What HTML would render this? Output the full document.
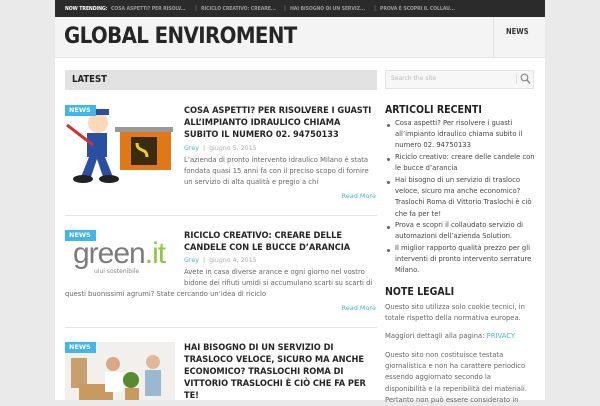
<!DOCTYPE html>
<html><head><meta charset="utf-8"><style>
*{margin:0;padding:0;box-sizing:border-box}
body{width:600px;height:400px;overflow:hidden;background:#eaeaea;font-family:"DejaVu Sans","Liberation Sans",sans-serif;position:relative}
.a{position:absolute;white-space:nowrap}
.c{font-family:"DejaVu Sans Condensed","DejaVu Sans",sans-serif}
.wrap{position:absolute;left:55px;top:0;width:490px;height:400px;background:#fff}
.top{position:absolute;left:55px;top:0;width:490px;height:17px;background:#2b2b2b}
.hdr{position:absolute;left:55px;top:17px;width:490px;height:41px;background:#f4f4f4;border-bottom:1px solid #e4e4e4}
.tr{font-family:"DejaVu Sans Condensed","DejaVu Sans",sans-serif;font-size:5.2px;font-weight:bold;color:#9a9a9a;top:6px;letter-spacing:-0.1px}
.badge{position:absolute;width:31px;height:11px;background:#43b5e8;color:#fff;font-size:6.5px;font-weight:bold;line-height:11px;padding-left:4px}
.t{position:absolute;left:184px;font-family:"DejaVu Sans Condensed","DejaVu Sans",sans-serif;font-size:9.2px;font-weight:bold;color:#262626;line-height:12px;white-space:nowrap;letter-spacing:-0.05px}
.m{position:absolute;left:184px;font-size:6.3px;color:#aaa;white-space:nowrap}
.m b{color:#43b5e8;font-weight:normal}
.ex{position:absolute;font-size:6.8px;color:#666;line-height:11.2px;white-space:nowrap}
.rm{position:absolute;right:224px;font-size:6.5px;color:#43b5e8}
.sep{position:absolute;left:65px;width:312px;height:1px;background:#e6e6e6}
.sb{position:absolute;left:395px;font-size:6.8px;color:#444;line-height:11.2px;white-space:nowrap}
.bul{position:absolute;left:387px;width:3px;height:3px;border-radius:50%;background:#666}
.st{position:absolute;left:385px;font-family:"DejaVu Sans Condensed","DejaVu Sans",sans-serif;font-size:10.5px;font-weight:bold;color:#222}
.nl{position:absolute;left:385px;font-size:6.8px;color:#666;line-height:11.2px;white-space:nowrap}
</style></head><body>
<div class="wrap"></div>
<div class="top"></div>
<div class="a tr" style="left:65px;color:#fff">NOW TRENDING:</div>
<div class="a tr" style="left:111px">COSA ASPETTI? PER RISOLV...</div>
<div class="a" style="left:195px;top:5px;font-size:6px;color:#777">|</div>
<div class="a tr" style="left:201px">RICICLO CREATIVO: CREARE...</div>
<div class="a" style="left:284px;top:5px;font-size:6px;color:#777">|</div>
<div class="a tr" style="left:290px">HAI BISOGNO DI UN SERVIZ...</div>
<div class="a" style="left:374px;top:5px;font-size:6px;color:#777">|</div>
<div class="a tr" style="left:380px">PROVA E SCOPRI IL COLLAU...</div>
<div class="hdr"></div>
<div class="a c" style="left:64px;top:24px;font-size:22px;font-weight:bold;color:#262626;letter-spacing:-0.6px">GLOBAL ENVIROMENT</div>
<div class="a" style="left:493px;top:17px;width:1px;height:40px;background:#e2e2e2"></div>
<div class="a c" style="left:506px;top:27px;font-size:7.5px;font-weight:bold;color:#333">NEWS</div>

<div class="a" style="left:65px;top:70px;width:312px;height:20px;background:#e2e2e2"></div>
<div class="a c" style="left:72px;top:74px;font-size:9.5px;font-weight:bold;color:#222">LATEST</div>
<div class="a" style="left:385px;top:70px;width:149px;height:19px;background:#f7f7f7;border:1px solid #e3e3e3"></div>
<div class="a" style="left:391px;top:75px;font-size:6px;color:#bbb">Search the site</div>
<div class="a" style="left:516px;top:74px;width:1px;height:10px;background:#ddd"></div>
<svg class="a" style="left:520px;top:73px" width="11" height="12" viewBox="0 0 11 12"><circle cx="4.5" cy="4.5" r="3.3" fill="none" stroke="#888" stroke-width="1.2"/><path d="M7 7l3 3.5" stroke="#888" stroke-width="1.4"/></svg>

<!-- post 1 -->
<svg class="a" style="left:65px;top:103px" width="110" height="82" viewBox="0 0 110 82">
<rect x="55" y="27" width="51" height="40" fill="#e07818"/><rect x="50" y="24" width="58" height="5" fill="#999"/><rect x="66" y="34" width="26" height="28" fill="#3a2a10"/><path d="M72 40c0 10 10 4 10 14" stroke="#e8d020" stroke-width="3" fill="none"/>
<circle cx="33" cy="20" r="10" fill="#fbd8b8"/><path d="M22 12h22v-6h-18z" fill="#2a4fa0"/><rect x="22" y="30" width="20" height="24" fill="#2a4fa0"/><path d="M24 54l-8 20h10l6-18l6 18h10l-8-20z" fill="#2a4fa0"/><ellipse cx="18" cy="76" rx="10" ry="4" fill="#222"/><ellipse cx="44" cy="76" rx="10" ry="4" fill="#222"/><path d="M2 22l26 20" stroke="#c33" stroke-width="3"/></svg>
<div class="badge" style="left:65px;top:105px">NEWS</div>
<div class="t" style="top:105px">COSA ASPETTI? PER RISOLVERE I GUASTI<br>ALL’IMPIANTO IDRAULICO CHIAMA<br>SUBITO IL NUMERO 02. 94750133</div>
<div class="m" style="top:145px"><b>Grey</b> &nbsp;|&nbsp; giugno 5, 2015</div>
<div class="ex" style="left:184px;top:155px">L’azienda di pronto intervento idraulico Milano è stata<br>fondata quasi 15 anni fa con il preciso scopo di fornire<br>un servizio di alta qualità e pregio a chi</div>
<div class="rm" style="top:192px">Read More</div>
<div class="sep" style="top:215px"></div>

<!-- post 2 -->
<div class="a" style="left:73px;top:237px;font-size:30px;color:#7c7c7c;letter-spacing:-1px;font-family:'Liberation Sans',sans-serif">green<span style="color:#8cc63f">.it</span></div>
<div class="a" style="left:94px;top:268px;font-size:6px;color:#888">uiui sostenibile</div>
<div class="badge" style="left:65px;top:230px">NEWS</div>
<div class="t" style="top:230px">RICICLO CREATIVO: CREARE DELLE<br>CANDELE CON LE BUCCE D’ARANCIA</div>
<div class="m" style="top:257px"><b>Grey</b> &nbsp;|&nbsp; giugno 4, 2015</div>
<div class="ex" style="left:184px;top:267px">Avete in casa diverse arance e ogni giorno nel vostro<br>bidone dei rifiuti umidi si accumulano scarti su scarti di</div>
<div class="ex" style="left:65px;top:289px">questi buonissimi agrumi? State cercando un’idea di riciclo</div>
<div class="rm" style="top:304px">Read More</div>
<div class="sep" style="top:327px"></div>

<!-- post 3 -->
<svg class="a" style="left:65px;top:342px" width="110" height="58" viewBox="0 0 110 58">
<rect width="110" height="58" fill="#f2f0ec"/><rect x="6" y="16" width="16" height="30" fill="#c8a070"/><rect x="14" y="42" width="34" height="16" fill="#c89a60"/><circle cx="48" cy="22" r="7" fill="#d8a888"/><rect x="40" y="30" width="18" height="20" fill="#fff"/><circle cx="88" cy="20" r="7" fill="#e0b898"/><rect x="80" y="28" width="16" height="26" fill="#9ab8d0"/><circle cx="66" cy="38" r="8" fill="#5a8a30"/><rect x="60" y="46" width="14" height="12" fill="#c89a60"/></svg>
<div class="badge" style="left:65px;top:342px">NEWS</div>
<div class="t" style="top:342px">HAI BISOGNO DI UN SERVIZIO DI<br>TRASLOCO VELOCE, SICURO MA ANCHE<br>ECONOMICO? TRASLOCHI ROMA DI<br>VITTORIO TRASLOCHI È CIÒ CHE FA PER<br>TE!</div>

<!-- sidebar -->
<div class="st" style="top:104px">ARTICOLI RECENTI</div>
<div class="bul" style="top:124px"></div>
<div class="sb" style="top:118px">Cosa aspetti? Per risolvere i guasti<br>all’impianto idraulico chiama subito il<br>numero 02. 94750133</div>
<div class="bul" style="top:158px"></div>
<div class="sb" style="top:152px">Riciclo creativo: creare delle candele con<br>le bucce d’arancia</div>
<div class="bul" style="top:181px"></div>
<div class="sb" style="top:175px">Hai bisogno di un servizio di trasloco<br>veloce, sicuro ma anche economico?<br>Traslochi Roma di Vittorio Traslochi è ciò<br>che fa per te!</div>
<div class="bul" style="top:226px"></div>
<div class="sb" style="top:220px">Prova e scopri il collaudato servizio di<br>automazioni dell’azienda Solution.</div>
<div class="bul" style="top:249px"></div>
<div class="sb" style="top:243px">Il miglior rapporto qualità prezzo per gli<br>interventi di pronto intervento serrature<br>Milano.</div>
<div class="st" style="top:286px">NOTE LEGALI</div>
<div class="nl" style="top:302px">Questo sito utilizza solo cookie tecnici, in<br>totale rispetto della normativa europea.</div>
<div class="nl" style="top:331px">Maggiori dettagli alla pagina: <span style="color:#43b5e8">PRIVACY</span></div>
<div class="nl" style="top:350px">Questo sito non costituisce testata<br>giornalistica e non ha carattere periodico<br>essendo aggiornato secondo la<br>disponibilità e la reperibilità dei materiali.<br>Pertanto non può essere considerato in</div>
</body></html>
